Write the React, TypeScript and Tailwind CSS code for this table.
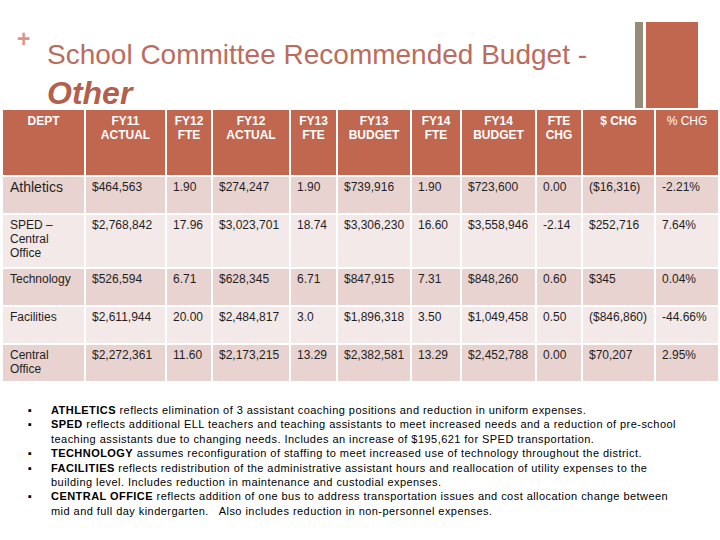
const header = [
  { t: ['DEPT'] },
  { t: ['FY11', 'ACTUAL'] },
  { t: ['FY12', 'FTE'] },
  { t: ['FY12', 'ACTUAL'] },
  { t: ['FY13', 'FTE'] },
  { t: ['FY13', 'BUDGET'] },
  { t: ['FY14', 'FTE'] },
  { t: ['FY14', 'BUDGET'] },
  { t: ['FTE', 'CHG'] },
  { t: ['$ CHG'] },
  { t: ['% CHG'], light: true },
];

const rows: { dept: string[]; big?: boolean; vals: string[] }[] = [
  {
    dept: ['Athletics'],
    big: true,
    vals: ['$464,563', '1.90', '$274,247', '1.90', '$739,916', '1.90', '$723,600', '0.00', '($16,316)', '-2.21%'],
  },
  {
    dept: ['SPED –', 'Central', 'Office'],
    vals: ['$2,768,842', '17.96', '$3,023,701', '18.74', '$3,306,230', '16.60', '$3,558,946', '-2.14', '$252,716', '7.64%'],
  },
  {
    dept: ['Technology'],
    vals: ['$526,594', '6.71', '$628,345', '6.71', '$847,915', '7.31', '$848,260', '0.60', '$345', '0.04%'],
  },
  {
    dept: ['Facilities'],
    vals: ['$2,611,944', '20.00', '$2,484,817', '3.0', '$1,896,318', '3.50', '$1,049,458', '0.50', '($846,860)', '-44.66%'],
  },
  {
    dept: ['Central', 'Office'],
    vals: ['$2,272,361', '11.60', '$2,173,215', '13.29', '$2,382,581', '13.29', '$2,452,788', '0.00', '$70,207', '2.95%'],
  },
];

const notes: { head: string; lines: string[] }[] = [
  { head: 'ATHLETICS', lines: [' reflects elimination of 3 assistant coaching positions and reduction in uniform expenses.'] },
  {
    head: 'SPED',
    lines: [
      ' reflects additional ELL teachers and teaching assistants to meet increased needs and a reduction of pre-school',
      'teaching assistants due to changing needs. Includes an increase of $195,621 for SPED transportation.',
    ],
  },
  { head: 'TECHNOLOGY', lines: [' assumes reconfiguration of staffing to meet increased use of technology throughout the district.'] },
  {
    head: 'FACILITIES',
    lines: [
      ' reflects redistribution of the administrative assistant hours and reallocation of utility expenses to the',
      'building level. Includes reduction in maintenance and custodial expenses.',
    ],
  },
  {
    head: 'CENTRAL OFFICE',
    lines: [
      ' reflects addition of one bus to address transportation issues and cost allocation change between',
      'mid and full day kindergarten.   Also includes reduction in non-personnel expenses.',
    ],
  },
];

export default function App() {
  return (
    <div className="h-[540px] w-[720px] overflow-hidden bg-white font-['Liberation_Sans',Arial,sans-serif]">
      <div className="flex h-[110px]">
        <div className="flex w-[635px] pl-[17px] pt-[28px]">
          <span className="w-[30px] text-[23px] font-bold leading-none text-[#d9968c]">+</span>
          <div className="flex flex-col">
            <div className="mt-[13px] text-[28px] leading-none text-[#bb6c5e]">
              School Committee Recommended Budget -
            </div>
            <div className="mt-[8px] text-[32px] font-bold italic leading-none text-[#b35f4b]">Other</div>
          </div>
        </div>
        <div className="flex gap-[3px] pt-[22px]">
          <div className="h-[86px] w-[8px] bg-[#958c79]" />
          <div className="h-[86px] w-[52px] bg-[#c1664f]" />
        </div>
      </div>

      <div className="ml-[3px] grid grid-cols-[81px_79px_44px_76px_45px_72px_48px_73px_44px_71px_62px] grid-rows-[65px_36px_52px_36px_36px_36px] gap-[2px]">
        {header.map((h, i) => (
          <div
            key={i}
            className={`bg-[#c1664f] pt-[4px] text-center text-[12px] leading-[14px] text-white ${
              h.light ? 'font-normal' : 'font-bold'
            }`}
          >
            {h.t.map((l) => (
              <div key={l}>{l}</div>
            ))}
          </div>
        ))}
        {rows.map((r, ri) => {
          const bg = ri % 2 === 0 ? 'bg-[#e8d3d0]' : 'bg-[#f3e9e8]';
          return [
            <div
              key={`d${ri}`}
              className={`${bg} pl-[7px] pt-[3px] text-[#1f1f1f] ${
                r.big ? 'text-[14px] leading-[15px]' : 'text-[12px] leading-[14px]'
              }`}
            >
              {r.dept.map((l) => (
                <div key={l}>{l}</div>
              ))}
            </div>,
            ...r.vals.map((v, vi) => (
              <div key={`${ri}-${vi}`} className={`${bg} px-[6px] pt-[3px] text-[12px] leading-[14px] text-[#1f1f1f]`}>
                {v}
              </div>
            )),
          ];
        })}
      </div>

      <ul className="mt-[22px] pl-[28px] text-[11px] leading-[14.4px] tracking-[0.45px] text-black">
        {notes.map((n) => (
          <li key={n.head} className="flex">
            <span className="w-[23px] shrink-0">▪</span>
            <div className="whitespace-pre">
              {n.lines.map((l, li) => (
                <div key={li}>
                  {li === 0 ? <b>{n.head}</b> : null}
                  {l}
                </div>
              ))}
            </div>
          </li>
        ))}
      </ul>
    </div>
  );
}
